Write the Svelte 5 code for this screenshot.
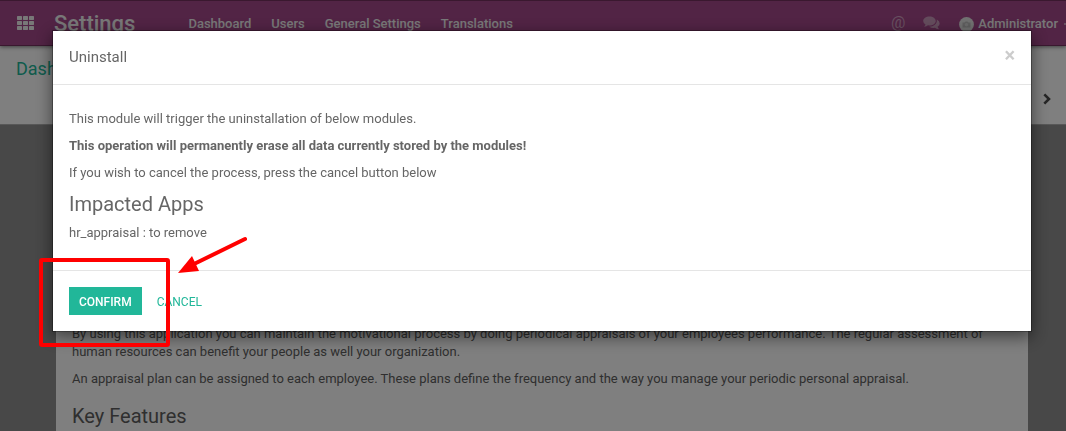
<script>
  const menus = ['Dashboard', 'Users', 'General Settings', 'Translations'];
  const tiles = [0, 6, 12].flatMap((y) => [0, 6, 12].map((x) => ({ x, y })));
</script>

<div class="page">
  <header class="navbar">
    <button class="icon apps" aria-label="Applications">
      <svg width="17" height="14" viewBox="0 0 17 17" preserveAspectRatio="none">
        {#each tiles as t}
          <rect x={t.x} y={t.y} width="5" height="5" rx="0.6" />
        {/each}
      </svg>
    </button>
    <a class="brand" href="#settings">Settings</a>
    <nav>
      {#each menus as menu}
        <a href="#{menu}">{menu}</a>
      {/each}
    </nav>
    <div class="systray">
      <button class="icon at" aria-label="Mentions">@</button>
      <button class="icon chat" aria-label="Messages">
        <svg width="17" height="14" viewBox="0 0 17 14">
          <path d="M6.5 0.5C10 0.5 12.7 2.5 12.7 5S10 9.500 6.500 9.500Q5.700 9.500 5 9.350Q3.500 10.600 1.400 10.800Q1.100 10.700 1.300 10.400Q2.200 9.500 2.500 8.400Q0.200 7.100 0.200 5C0.200 2.500 3 0.500 6.500 0.500Z" />
          <path d="M13.800 3.600Q16.700 5 16.700 7.500Q16.700 9.500 14.600 10.800Q14.900 12 15.700 12.800Q15.900 13.200 15.500 13.300Q13.500 13.100 11.900 11.800Q8.700 12.300 6.300 10.700C10.600 10.700 14.500 8.200 13.800 3.600Z" />
        </svg>
      </button>
      <button class="user">
        <svg width="15" height="15" viewBox="0 0 15 15">
          <circle cx="7.5" cy="7.5" r="7.400" fill="#e2e2e2" />
          <path d="M3.500 5.500h2l1-1h2l1 1h2v5h-8z" fill="#bcbcbc" />
          <circle cx="7.500" cy="7.800" r="1.700" fill="#d6d6d6" />
        </svg>
        <span>Administrator</span>
        <i class="caret"></i>
      </button>
    </div>
  </header>

  <section class="panel">
    <a class="crumb" href="#dashboard">Dashboard</a>
    <button class="icon next" aria-label="Next">
      <svg width="8" height="12" viewBox="0 0 8 12">
        <path d="M1.300 1.300L6 6L1.300 10.700" fill="none" stroke="#4c4c4c" stroke-width="2.600" />
      </svg>
    </button>
  </section>

  <main>
    <article class="sheet">
      <p>By using this application you can maintain the motivational process by doing periodical appraisals of your employees performance. The regular assessment of human resources can benefit your people as well your organization.</p>
      <p>An appraisal plan can be assigned to each employee. These plans define the frequency and the way you manage your periodic personal appraisal.</p>
      <h2>Key Features</h2>
    </article>
  </main>
</div>

<div class="backdrop">
  <div class="modal" role="dialog" aria-modal="true" aria-labelledby="title">
    <div class="head">
      <h1 id="title">Uninstall</h1>
      <button class="icon close" aria-label="Close">×</button>
    </div>
    <div class="body">
      <p>This module will trigger the uninstallation of below modules.</p>
      <p><b>This operation will permanently erase all data currently stored by the modules!</b></p>
      <p>If you wish to cancel the process, press the cancel button below</p>
      <h2>Impacted Apps</h2>
      <p>hr_appraisal : to remove</p>
    </div>
    <div class="foot">
      <button class="btn primary">Confirm</button>
      <button class="btn link">Cancel</button>
    </div>
  </div>
</div>

<svg class="marks" width="260" height="360" viewBox="0 0 260 360" aria-hidden="true">
  <rect x="41" y="260" width="127" height="85" rx="1" fill="none" stroke="#f00" stroke-width="4" />
  <path d="M245 239L192 265" stroke="#f00" stroke-width="4" stroke-linecap="round" />
  <path d="M178 273L192 256L199 271Z" fill="#f00" />
</svg>

<style>
  :global(body) {
    margin: 0;
    background: #909090;
  }
  .page,
  .backdrop {
    font: 13px/18px Roboto, 'Noto Sans', sans-serif;
  }
  .page {
    min-height: 100vh;
    display: flex;
    flex-direction: column;
    overflow: hidden;
    color: #5e5e5e;
  }
  button {
    font: inherit;
    color: inherit;
    background: none;
    border: 0;
    padding: 0;
  }
  a {
    color: inherit;
    text-decoration: none;
  }
  svg {
    display: block;
  }
  p {
    margin: 0 0 9px;
  }
  h2 {
    margin: 0;
    font-size: 20px;
    line-height: 22px;
    font-weight: 400;
  }
  .navbar {
    display: flex;
    align-items: center;
    box-sizing: border-box;
    height: 46px;
    padding: 2px 0 0 17px;
    background: #a4488a;
    border-top: 1px solid #74305f;
    border-bottom: 1px solid #74305f;
    box-shadow: 0 1px 4px rgba(0, 0, 0, 0.5);
    position: relative;
    color: #f0f0f0;
    font-weight: 500;
    white-space: nowrap;
  }
  .apps {
    fill: #f0f0f0;
    margin: 0 20px 2px 0;
  }
  .brand {
    font-size: 22px;
    line-height: 26px;
    margin-right: 53px;
  }
  nav {
    display: flex;
    gap: 20px;
  }
  .systray {
    display: flex;
    align-items: center;
    margin-left: auto;
  }
  .at {
    font-size: 16px;
    font-weight: 400;
    color: #cf9fc0;
    margin: 0 18px 2px 0;
  }
  .chat {
    fill: #c999ba;
    margin: 0 19px 2px 0;
  }
  .user {
    display: flex;
    align-items: center;
    gap: 4px;
  }
  .caret {
    width: 2px;
    height: 2px;
    background: #d0a0c0;
    margin-left: 2px;
  }
  .panel {
    display: flex;
    justify-content: space-between;
    box-sizing: border-box;
    height: 79px;
    padding: 12px 15px 0 16px;
    background: #fff;
    border-bottom: 1px solid #b0b0b0;
  }
  .crumb {
    font-size: 18px;
    line-height: 22px;
    color: #21b799;
  }
  .next {
    align-self: flex-end;
    margin-bottom: 19px;
  }
  main {
    flex: 1;
    display: flex;
    padding: 0 38px 0 56px;
    background: #909090;
  }
  .sheet {
    flex: 1;
    padding: 200px 16px 0;
    background: #fff;
  }
  .sheet h2 {
    margin-top: 17px;
  }
  .backdrop {
    position: fixed;
    inset: 0;
    padding: 30px 34px 0 52px;
    background: rgba(0, 0, 0, 0.5);
    color: #666;
  }
  .modal {
    background: #fff;
    background-clip: padding-box;
    border: 1px solid rgba(0, 0, 0, 0.3);
    box-shadow: 0 5px 15px rgba(0, 0, 0, 0.5);
  }
  .head {
    display: flex;
    justify-content: space-between;
    align-items: flex-start;
    padding: 16px;
    border-bottom: 1px solid #e5e5e5;
  }
  h1 {
    margin: 0;
    font-size: 15px;
    line-height: 21px;
    font-weight: 400;
  }
  .close {
    font-size: 20px;
    line-height: 16px;
    font-weight: 700;
    color: #ccc;
  }
  .body {
    padding: 25px 16px 19px;
  }
  .body h2 {
    margin: 11px 0 9px;
  }
  .foot {
    display: flex;
    gap: 5px;
    padding: 16px;
    border-top: 1px solid #e5e5e5;
  }
  .btn {
    height: 28px;
    padding: 2px 10px 0;
    font-size: 12px;
    text-transform: uppercase;
  }
  .primary {
    background: #21b799;
    color: #fff;
    font-weight: 500;
  }
  .link {
    color: #21b799;
  }
  .marks {
    position: fixed;
    top: 0;
    left: 0;
    pointer-events: none;
  }
</style>
